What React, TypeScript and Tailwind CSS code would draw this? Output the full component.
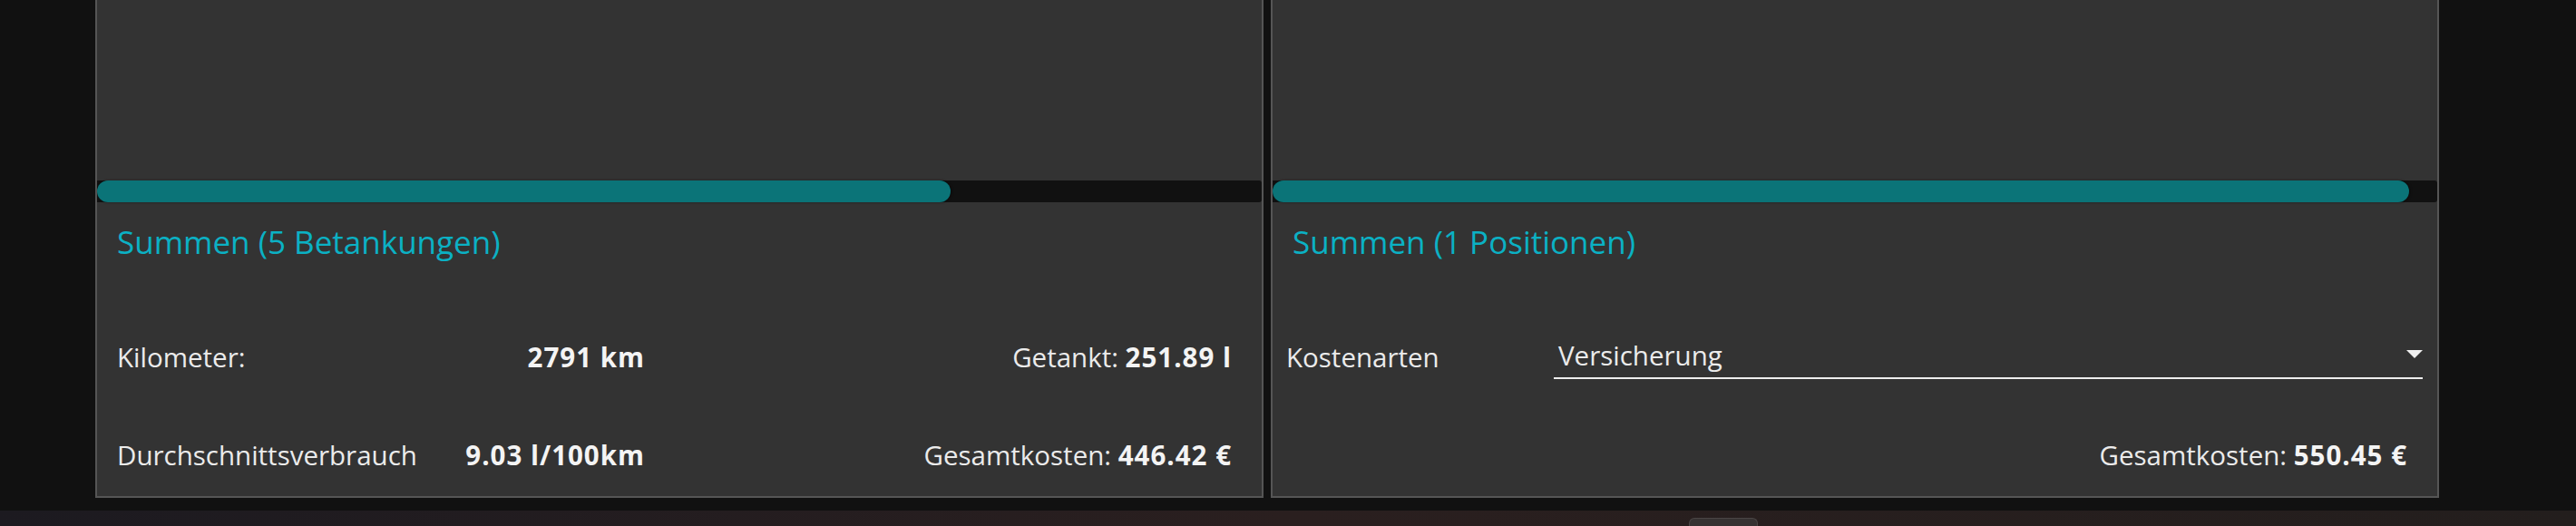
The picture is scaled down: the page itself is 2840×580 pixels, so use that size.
import React from "react";

interface Bar {
  percent: number;
}

function ProgressBar({ percent }: Bar) {
  return (
    <div className="h-[24px] w-full rounded-r-[3px] bg-[#111111]">
      <div
        className="h-full rounded-full bg-[#0b7478] shadow-[1px_0_3px_rgba(0,0,0,0.45)]"
        style={{ width: `${percent}%` }}
      />
    </div>
  );
}

function Panel({ children }: { children: React.ReactNode }) {
  return (
    <div className="flex h-[549px] w-[1288px] flex-col border-x-2 border-b-2 border-[#555555] bg-[#333333]">
      {children}
    </div>
  );
}

function Title({ text }: { text: string }) {
  return (
    <h2 className="mt-[26px] pl-[22px] text-[35px] leading-[35px] font-normal text-[#0bb1c4]">
      {text}
    </h2>
  );
}

function Value({ children }: { children: React.ReactNode }) {
  return <span className="font-bold tracking-[1px] text-[#f4f4f4]">{children}</span>;
}

export default function App() {
  return (
    <div
      className="flex h-[580px] w-[2840px] flex-col bg-[#111111] text-[#ebebeb]"
      style={{ fontFamily: '"Open Sans", "Noto Sans", sans-serif' }}
    >
      <div className="flex h-[563px] gap-[8px] pl-[105px]">
        <Panel>
          <div className="h-[199px]" />
          <ProgressBar percent={73.3} />
          <Title text="Summen (5 Betankungen)" />

          <div className="mt-[95px] flex items-baseline pl-[22px] pr-[33px] text-[29.5px] leading-[30px]">
            <div className="flex w-[582px] justify-between">
              <span>Kilometer:</span>
              <Value>2791 km</Value>
            </div>
            <div className="ml-auto">
              Getankt: <Value>251.89 l</Value>
            </div>
          </div>

          <div className="mt-[78px] flex items-baseline pl-[22px] pr-[33px] text-[29.5px] leading-[30px]">
            <div className="flex w-[582px] justify-between">
              <span>Durchschnittsverbrauch</span>
              <Value>9.03 l/100km</Value>
            </div>
            <div className="ml-auto">
              Gesamtkosten: <Value>446.42 €</Value>
            </div>
          </div>
        </Panel>

        <Panel>
          <div className="h-[199px]" />
          <ProgressBar percent={97.6} />
          <Title text="Summen (1 Positionen)" />

          <div className="mt-[93px] flex items-start pl-[15px] pr-[16px] text-[29.5px] leading-[30px]">
            <span className="mt-[2px] w-[295px]">Kostenarten</span>
            <div className="flex flex-1 items-start justify-between border-b-2 border-[#eeeeee] pb-[9px] pl-[5px]">
              <span>Versicherung</span>
              <svg width="18" height="9" viewBox="0 0 18 9" className="mt-[9px]">
                <path d="M0 0 H18 L9 9 Z" fill="#f0f0f0" />
              </svg>
            </div>
          </div>

          <div className="mt-[69px] flex justify-end pr-[33px] text-[29.5px] leading-[30px]">
            <div>
              Gesamtkosten: <Value>550.45 €</Value>
            </div>
          </div>
        </Panel>
      </div>

      <div className="flex h-[17px] bg-gradient-to-r from-[#1c1a20] via-[#2a1f1f] to-[#231e1d] pl-[1862px]">
        <div className="mt-[8px] h-[9px] w-[76px] rounded-t-[6px] border-x border-t border-[#4a4545] bg-[#363232]" />
      </div>
    </div>
  );
}
